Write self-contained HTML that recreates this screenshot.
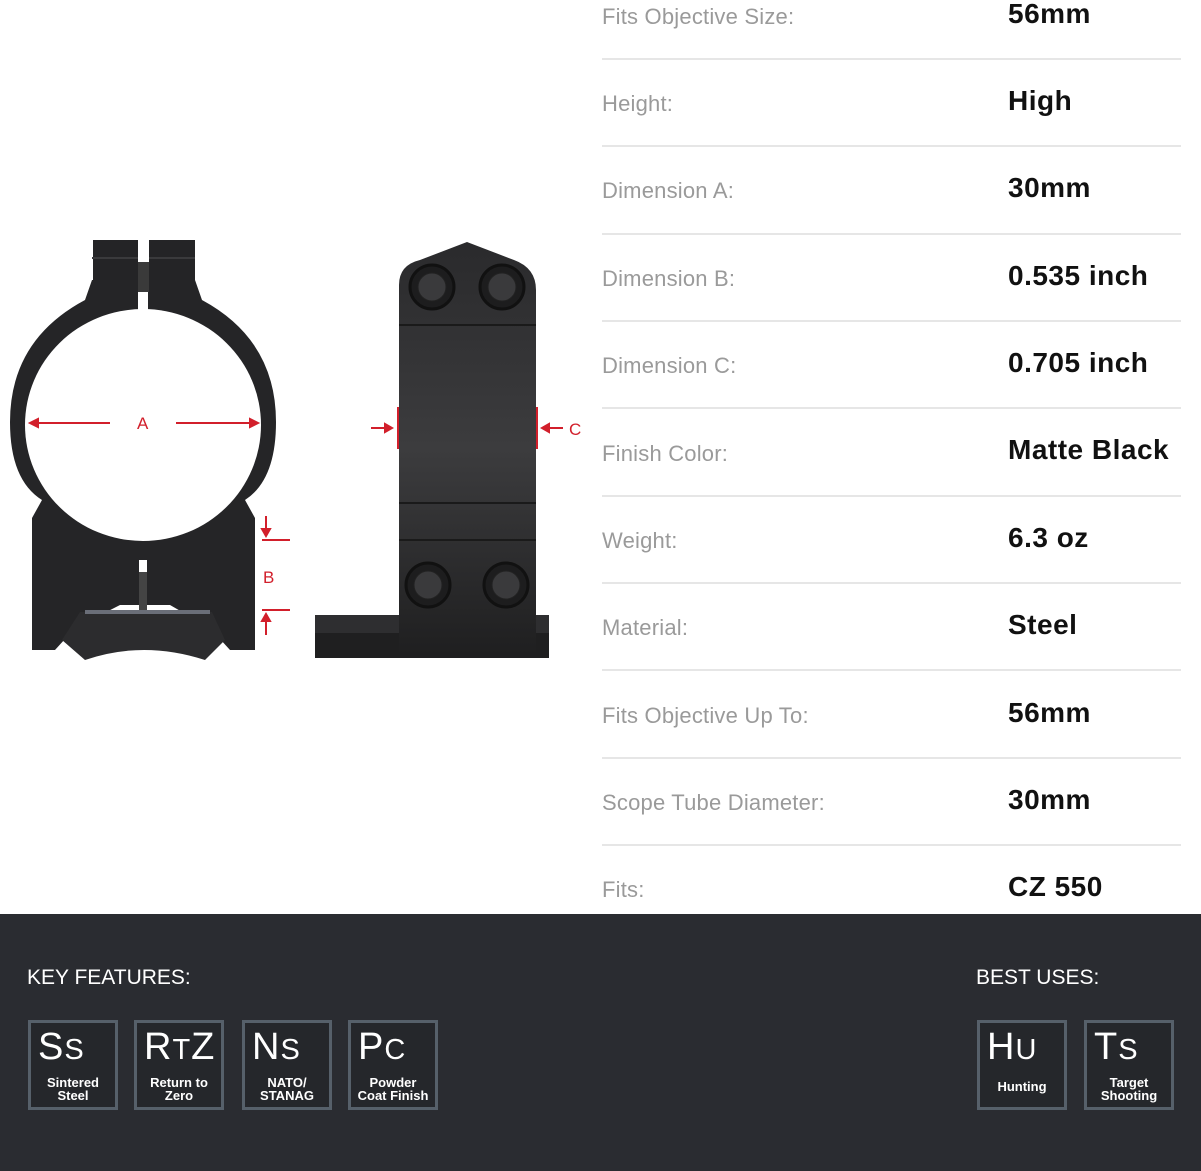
<!DOCTYPE html>
<html><head><meta charset="utf-8"><style>
html,body{margin:0;padding:0;background:#fff;width:1201px;height:1171px;overflow:hidden;position:relative;font-family:"Liberation Sans",sans-serif}
.lab{position:absolute;left:602px;font-size:22px;color:#9a9a9a;letter-spacing:0.2px}
.val{position:absolute;left:1008px;font-size:28px;font-weight:bold;color:#111;letter-spacing:0.5px}
.hr{position:absolute;left:602px;width:579px;height:2px;background:#e6e6e6}
.foot{position:absolute;left:0;top:914px;width:1201px;height:257px;background:#2a2c31}
.h{position:absolute;top:966px;color:#fff;font-size:21px;letter-spacing:0}
.box{position:absolute;top:1020px;width:84px;height:84px;border:3px solid #56606a;background:#25272b;color:#fff;text-align:center}
.box .s{position:absolute;left:7px;top:2px;font-size:38px;font-weight:normal;letter-spacing:1px;line-height:44px}
.box .s small{font-size:29px}
.box .t{position:absolute;left:0;right:0;top:53px;font-size:13px;font-weight:bold;line-height:13px}
</style></head><body>
<svg width="600" height="700" style="position:absolute;left:0;top:0">
<defs><linearGradient id="g" x1="0" x2="0" y1="0" y2="1"><stop offset="0" stop-color="#2a2a2c"/><stop offset="0.5" stop-color="#3c3c3e"/><stop offset="1" stop-color="#1f1f20"/></linearGradient></defs>
<path d="M93 240h45v60h-45z M149 240h46v60h-46z" fill="#242426"/>
<path d="M92 258h46M149 258h46" stroke="#3a3a3c" stroke-width="2"/>
<path d="M85 300 L92 280 L195 280 L202 300 Q276 340 276 422 Q276 480 245 500 L255 518 L255 650 L230 650 L210 628 L170 605 L120 605 L75 628 L55 650 L32 650 L32 518 L42 500 Q10 480 10 422 Q10 340 85 300Z" fill="#252527"/>
<path d="M62 640 L80 612 L212 612 L225 640 L205 660 Q143 640 85 660Z" fill="#2c2c2e"/>
<ellipse cx="143" cy="425" rx="118" ry="116" fill="#fff"/>
<rect x="138" y="280" width="10" height="30" fill="#fff"/>
<rect x="138" y="262" width="11" height="30" fill="#3a3a3a"/>
<rect x="139" y="560" width="8" height="12" fill="#fff"/>
<rect x="139" y="572" width="8" height="38" fill="#444"/>
<path d="M85 612h125" stroke="#6a6e78" stroke-width="4"/>
<rect x="315" y="615" width="234" height="43" fill="#1f1f20"/>
<rect x="315" y="615" width="234" height="18" fill="#2e2e30"/>
<path d="M399 285 Q399 265 420 260 L467 242 L514 260 Q536 268 536 290 L536 655 L399 655Z" fill="url(#g)"/>
<path d="M399 325h137M399 503h137M399 540h137" stroke="#1a1a1a" stroke-width="2"/>
<g fill="#1d1d1e" stroke="#111" stroke-width="3">
<circle cx="432" cy="287" r="22"/><circle cx="502" cy="287" r="22"/><circle cx="428" cy="585" r="22"/><circle cx="506" cy="585" r="22"/></g>
<g fill="#3a3a3c" stroke="#222" stroke-width="1">
<circle cx="432" cy="287" r="14"/><circle cx="502" cy="287" r="14"/><circle cx="428" cy="585" r="14"/><circle cx="506" cy="585" r="14"/></g>
<g stroke="#d21f2b" stroke-width="2" fill="#d21f2b">
<path d="M32 423h78M176 423h80M398 407v42M537 407v42M371 428h18M545 428h18M262 540h28M262 610h28M266 516v18M266 617v18" fill="none"/>
<path d="M30 423l8-4v8z M258 423l-8-4v8z M392 428l-7-4v8z M542 428l7-4v8z M266 536l-4-7h8z M266 614l-4 7h8z"/>
</g>
<g fill="#d21f2b" font-size="17" font-family="Liberation Sans">
<text x="137" y="429">A</text><text x="569" y="435">C</text><text x="263" y="583">B</text></g>
</svg>

<div class="lab" style="top:4px">Fits Objective Size:</div><div class="val" style="top:-2px">56mm</div><div class="hr" style="top:58px"></div>
<div class="lab" style="top:91px">Height:</div><div class="val" style="top:85px">High</div><div class="hr" style="top:145px"></div>
<div class="lab" style="top:178px">Dimension A:</div><div class="val" style="top:172px">30mm</div><div class="hr" style="top:233px"></div>
<div class="lab" style="top:266px">Dimension B:</div><div class="val" style="top:260px">0.535 inch</div><div class="hr" style="top:320px"></div>
<div class="lab" style="top:353px">Dimension C:</div><div class="val" style="top:347px">0.705 inch</div><div class="hr" style="top:407px"></div>
<div class="lab" style="top:441px">Finish Color:</div><div class="val" style="top:434px">Matte Black</div><div class="hr" style="top:495px"></div>
<div class="lab" style="top:528px">Weight:</div><div class="val" style="top:522px">6.3 oz</div><div class="hr" style="top:582px"></div>
<div class="lab" style="top:615px">Material:</div><div class="val" style="top:609px">Steel</div><div class="hr" style="top:669px"></div>
<div class="lab" style="top:703px">Fits Objective Up To:</div><div class="val" style="top:697px">56mm</div><div class="hr" style="top:757px"></div>
<div class="lab" style="top:790px">Scope Tube Diameter:</div><div class="val" style="top:784px">30mm</div><div class="hr" style="top:844px"></div>
<div class="lab" style="top:877px">Fits:</div><div class="val" style="top:871px">CZ 550</div>

<div class="foot"></div>
<div class="h" style="left:27px">KEY FEATURES:</div>
<div class="h" style="left:976px">BEST USES:</div>
<div class="box" style="left:28px"><div class="s">S<small>S</small></div><div class="t">Sintered<br>Steel</div></div>
<div class="box" style="left:134px"><div class="s">R<small>T</small>Z</div><div class="t">Return to<br>Zero</div></div>
<div class="box" style="left:242px"><div class="s">N<small>S</small></div><div class="t">NATO/<br>STANAG</div></div>
<div class="box" style="left:348px"><div class="s">P<small>C</small></div><div class="t">Powder<br>Coat Finish</div></div>
<div class="box" style="left:977px"><div class="s">H<small>U</small></div><div class="t" style="top:57px">Hunting</div></div>
<div class="box" style="left:1084px"><div class="s">T<small>S</small></div><div class="t">Target<br>Shooting</div></div>
</body></html>
